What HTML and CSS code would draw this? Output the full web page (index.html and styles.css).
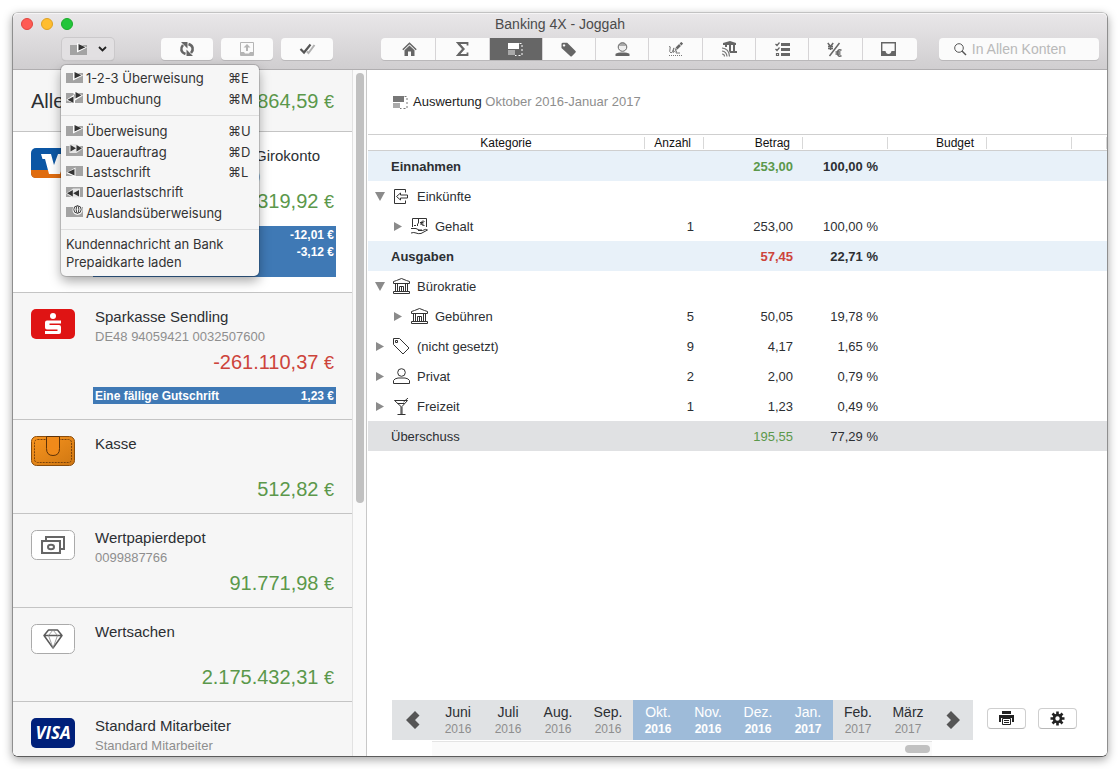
FILE: index.html
```html
<!DOCTYPE html>
<html lang="de">
<head>
<meta charset="utf-8">
<title>Banking 4X - Joggah</title>
<link rel="stylesheet" href="styles.css">
</head>
<body>
<svg class="sprite" aria-hidden="true">
  <symbol id="i-out" viewBox="0 0 17 13"><path fill="#a3a3a3" d="M0 2h17v10H0z"/><path fill="#fff" d="M7 0l10 4.500-10 5z"/><path fill="#333" d="M8.500 1v6.500l7-3.300z"/></symbol>
  <symbol id="i-swap" viewBox="0 0 17 13"><path fill="#a3a3a3" d="M0 2h17v10H0z"/><path fill="#fff" d="M7 0l10 4.500-8 5zM9 3L0 9l9 4z"/><path fill="#333" d="M9.500 1v6.500l6-3.300zM7.500 5.500v6.500l-6-3.300z"/></symbol>
  <symbol id="i-out2" viewBox="0 0 17 13"><path fill="#a3a3a3" d="M0 2h17v10H0z"/><path fill="#e6e6e6" d="M3.500 0h7l6.500 4.500-6.500 4.500-7 0z"/><path fill="#333" d="M4.500 1v6.500l5.500-3.300zM10.500 1v6.500l5.500-3.300z"/></symbol>
  <symbol id="i-in" viewBox="0 0 17 13"><path fill="#a3a3a3" d="M0 2h17v10H0z"/><path fill="#fff" d="M9.500 3.500L0 9l9.500 4z"/><path fill="#333" d="M8.500 5v6.500l-7-3.300z"/></symbol>
  <symbol id="i-in2" viewBox="0 0 17 13"><path fill="#a3a3a3" d="M0 2h17v10H0z"/><path fill="#e6e6e6" d="M7 3.500L0 8.500l6 4h8v-9z"/><path fill="#333" d="M6.800 5v6.500L1 8.200zM13 5v6.500L7.200 8.200z"/></symbol>
  <symbol id="i-world" viewBox="0 0 17 13"><path fill="#a3a3a3" d="M0 2h17v10H0z"/><circle cx="11.500" cy="5" r="5" fill="#f6f6f6"/><circle cx="11.500" cy="4.500" r="3.700" fill="none" stroke="#444"/><ellipse cx="11.500" cy="4.500" rx="1.300" ry="3.700" fill="none" stroke="#444"/></symbol>
  <symbol id="i-report" viewBox="0 0 15 13"><path fill="#aaa" d="M0 7h7v5H0z"/><path fill="currentColor" d="M0 0h11v6H0z"/><path fill="none" stroke="currentColor" stroke-dasharray="2 2" d="M11.500.5H14v12H7"/></symbol>
  <symbol id="i-bank" viewBox="0 0 17 17"><path fill="none" stroke="#333" d="M.5 5.500v-2l3-1 5-2 5 2 3 1v2zM2.500 5.500v8M4.500 5.500v8M12.500 5.500v8M14.500 5.500v8M6.500 13.500v-5h4v5M8.500 9v5M.5 15.500v-2h16v2z"/></symbol>
</svg>
<div class="window">
  <header class="chrome">
    <div class="titlebar">
      <div class="lights"><button class="light light-close" aria-label="Schließen"></button><button class="light light-min" aria-label="Minimieren"></button><button class="light light-zoom" aria-label="Zoomen"></button></div>
      <h1 class="title">Banking 4X - Joggah</h1>
    </div>
    <div class="toolbar">
      <div class="dropdown">
        <button class="tool tool-open" aria-label="Neuer Auftrag" aria-expanded="true"><svg width="17" height="13"><use href="#i-out"/></svg><svg width="9" height="6" viewBox="0 0 9 6"><path d="M1 1l3.500 3.500L8 1" fill="none" stroke="#222" stroke-width="1.800"/></svg></button>
        <div class="menu" role="menu">
          <div class="menu-group menu-group-two">
            <button class="menu-item" role="menuitem"><svg class="menu-icon"><use href="#i-out"/></svg><span>1-2-3 Überweisung</span><kbd>⌘E</kbd></button>
            <button class="menu-item" role="menuitem"><svg class="menu-icon"><use href="#i-swap"/></svg><span>Umbuchung</span><kbd>⌘M</kbd></button>
          </div>
          <div class="menu-group menu-group-five">
            <button class="menu-item" role="menuitem"><svg class="menu-icon"><use href="#i-out"/></svg><span>Überweisung</span><kbd>⌘U</kbd></button>
            <button class="menu-item" role="menuitem"><svg class="menu-icon"><use href="#i-out2"/></svg><span>Dauerauftrag</span><kbd>⌘D</kbd></button>
            <button class="menu-item" role="menuitem"><svg class="menu-icon"><use href="#i-in"/></svg><span>Lastschrift</span><kbd>⌘L</kbd></button>
            <button class="menu-item" role="menuitem"><svg class="menu-icon"><use href="#i-in2"/></svg><span>Dauerlastschrift</span></button>
            <button class="menu-item" role="menuitem"><svg class="menu-icon"><use href="#i-world"/></svg><span>Auslandsüberweisung</span></button>
          </div>
          <div class="menu-group menu-group-plain">
            <button class="menu-item" role="menuitem">Kundennachricht an Bank</button>
            <button class="menu-item" role="menuitem">Prepaidkarte laden</button>
          </div>
        </div>
      </div>
      <div class="tools">
        <button class="tool" aria-label="Aktualisieren"><svg width="16" height="16" viewBox="0 0 16 16"><path fill="none" stroke="#666" stroke-width="2.600" d="M6.500 13C2 11.500 1 7.500 4 4M9.500 3c4.500 1.500 5.500 5.500 2.500 9"/><path fill="#666" d="M2 1h6.500v6.500zM14 15H7.500V8.500z"/></svg></button>
        <button class="tool" aria-label="Ausgang"><svg width="14" height="14" viewBox="0 0 14 14"><path fill="none" stroke="#b5b5b5" d="M.5.5h13v13H.5z"/><path fill="#b5b5b5" d="M1 10h3l1 1.500h4l1-1.500h3v3H1zM7 2l3.500 3.500H8V9H6V5.500H3.500z"/></svg></button>
        <button class="tool" aria-label="Als gelesen markieren"><svg width="17" height="12" viewBox="0 0 17 12"><path fill="none" stroke="#b0b0b0" stroke-width="2" d="M8 8.500l1.500 1.500L15.500 2"/><path fill="none" stroke="#555" stroke-width="2.200" d="M1.500 6L5 9.500 11.500 1.500"/></svg></button>
      </div>
      <nav class="segments" aria-label="Ansicht">
        <button class="seg" aria-label="Start"><svg width="15" height="15" viewBox="0 0 15 15"><path fill="none" stroke="#666" stroke-width="1.600" d="M.8 7.800L7.500 1.300l6.700 6.500"/><path fill="#666" d="M2.500 8.300l5-4.800 5 4.800V14H9V9.500H6V14H2.500z"/></svg></button>
        <button class="seg" aria-label="Umsätze"><svg width="13" height="14" viewBox="0 0 13 14"><path fill="none" stroke="#666" stroke-width="1.800" d="M11.500 3.500V1H2l5.500 6L2 13h9.500v-2.500"/><path fill="none" stroke="#666" stroke-width="2" d="M2.500 1.500L7.500 7l-5 5.500"/></svg></button>
        <button class="seg seg-active" aria-label="Auswertung"><svg width="15" height="13"><use href="#i-report"/></svg></button>
        <button class="seg" aria-label="Kategorien"><svg width="15" height="15" viewBox="0 0 15 15"><path fill="#666" fill-rule="evenodd" d="M.5 2Q.5.8 2 .8h4.200L14.500 9q.6.700 0 1.400l-3.700 3.800q-.7.500-1.400 0L.5 6zM3 2.200a1.200 1.200 0 1 0 .1 0z"/></svg></button>
        <button class="seg" aria-label="Kontakte"><svg width="15" height="15" viewBox="0 0 15 15"><circle cx="7.500" cy="5" r="4.300" fill="#eee" stroke="#666"/><path fill="#666" fill-opacity=".5" d="M3.500 4Q4.500.8 7.500.8T11.500 4z"/><path fill="#666" d="M.5 14v-2Q1 11 5 10.500h5Q14 11 14.500 12v2z"/></svg></button>
        <button class="seg" aria-label="Verträge"><svg width="15" height="15" viewBox="0 0 15 15"><path fill="none" stroke="#777" d="M1 4.500Q3 4 2 7T3 11q1.500-.5 2.500-4T5 10.500Q7 9 8 8.500T8 11h4"/><path fill="none" stroke="#666" stroke-width="2.600" d="M8.500 6.500L12 3M12.500 2.500L14.200.8"/><path fill="#666" d="M7 8.500l.5-2.500L9 7.500z"/><path fill="none" stroke="#777" stroke-dasharray="1 1" d="M1 13.500h13"/></svg></button>
        <button class="seg" aria-label="Bankkontakte"><svg width="16" height="16" viewBox="0 0 16 16"><path fill="#666" d="M2 2l7-2 6 2v2H2zM8 4h2v6H8zM12 4h2v6h-2zM4 4h2v2H4zM8 10h8v2H9z"/><path fill="none" stroke="#777" stroke-width="1.200" d="M1 7q7 .5 7.500 8.500M1 10q4.500.5 5 5.500M1 13q2.500 0 2.500 2.500"/></svg></button>
        <button class="seg" aria-label="Aufträge"><svg width="15" height="15" viewBox="0 0 15 15"><path fill="#666" d="M6 1h9v3H6zM6 6h9v3H6zM6 11h9v3H6z"/><path fill="none" stroke="#666" stroke-width="1.200" d="M.5 2l1.500 1.500L4.500.5M.5 7l1.500 1.500L4.500 5.500M1.500 11.500h2v2h-2z"/></svg></button>
        <button class="seg" aria-label="Devisen"><svg width="16" height="15" viewBox="0 0 16 15"><path fill="none" stroke="#666" stroke-width="1.500" d="M12.500 1l-10 13M.8 1L3.500 4.500 6.200 1M3.500 4v4M1 4.500h5M1 6.500h5M14.500 8.200Q10.500 6.800 10.500 11t4 2.800M8.500 10h5M8.500 12h5"/></svg></button>
        <button class="seg" aria-label="Ablage"><svg width="15" height="14" viewBox="0 0 15 14"><path fill="none" stroke="#666" stroke-width="1.400" d="M.7.7h13.600v12.600H.7z"/><path fill="#666" d="M1 9h3.500q.5 3 3 3t3-3H14v4.500H1z"/></svg></button>
      </nav>
      <label class="search"><svg width="13" height="13" viewBox="0 0 13 13"><circle cx="5" cy="5" r="4.300" fill="none" stroke="#555"/><path d="M8 8l4 4" stroke="#555" stroke-width="1.400"/></svg><input class="search-input" type="search" aria-label="Suche" placeholder="In Allen Konten"></label>
    </div>
  </header>
  <div class="body">
    <aside class="sidebar">
      <div class="accounts">
        <section class="total"><h2 class="total-name">Alle</h2><p class="amount">864,59 <small>€</small></p></section>
        <section class="account account-selected">
          <svg class="logo" viewBox="0 0 44 30"><rect width="44" height="30" rx="5" fill="#0b56a4"/><path fill="#e06c0f" d="M0 22h44v3q0 5-5 5H5q-5 0-5-5z"/><path fill="#fff" d="M10 6h10l3 11 4-11h9l-7 20H18L14 11h-2.500z"/></svg>
          <div class="account-text"><p class="account-name account-name-product">Girokonto</p><p class="account-sub account-sub-end">)</p><p class="amount">319,92 <small>€</small></p>
          <div class="notes"><p class="note"><span></span><span>-12,01 €</span></p><p class="note"><span></span><span>-3,12 €</span></p><p class="note"></p></div></div>
        </section>
        <section class="account">
          <svg class="logo" viewBox="0 0 44 30"><rect width="44" height="30" rx="5" fill="#df1414"/><circle cx="22" cy="7" r="3" fill="#fff"/><path fill="#fff" d="M16 11.500h14v3H18.500v1.500H28q2 0 2 2v5q0 2-2 2H14v-3h12.500v-1.500H16q-2 0-2-2v-5q0-2 2-2z"/></svg>
          <div class="account-text"><p class="account-name">Sparkasse Sendling</p><p class="account-sub">DE48 94059421 0032507600</p><p class="amount amount-negative">-261.110,37 <small>€</small></p>
          <div class="notes"><p class="note"><span>Eine fällige Gutschrift</span><span>1,23 €</span></p></div></div>
        </section>
        <section class="account">
          <svg class="logo" viewBox="0 0 44 30"><defs><linearGradient id="leather" x2="1" y2="1"><stop stop-color="#f9951f"/><stop offset="1" stop-color="#cf7712"/></linearGradient></defs><rect x=".5" y=".5" width="43" height="29" rx="5" fill="url(#leather)" stroke="#8a4d0c"/><rect x="3.500" y="3.500" width="37" height="23" rx="3" fill="none" stroke="#7a420b" stroke-dasharray="2 1"/><path fill="#f08a1a" stroke="#5d3208" d="M15.500.5v12q0 7 6.500 7t6.500-7V.5z"/></svg>
          <div class="account-text"><p class="account-name">Kasse</p><p class="account-sub"></p><p class="amount">512,82 <small>€</small></p></div>
        </section>
        <section class="account">
          <svg class="logo" viewBox="0 0 44 30"><rect x=".5" y=".5" width="43" height="29" rx="5" fill="#fff" stroke="#aaa"/><path fill="none" stroke="#666" stroke-width="2" d="M15 10V7h18v12h-3M11 11h18v12H11z"/><path fill="#666" d="M10 10h5l-5 4zM30 10h-5l5 4zM10 24h5l-5-4zM30 24h-5l5-4z"/><ellipse cx="20" cy="17" rx="3" ry="2.300" fill="none" stroke="#666" stroke-width="2"/></svg>
          <div class="account-text"><p class="account-name">Wertpapierdepot</p><p class="account-sub">0099887766</p><p class="amount">91.771,98 <small>€</small></p></div>
        </section>
        <section class="account">
          <svg class="logo" viewBox="0 0 44 30"><rect x=".5" y=".5" width="43" height="29" rx="5" fill="#fff" stroke="#aaa"/><path fill="none" stroke="#5a5a5a" stroke-width="1.500" stroke-linejoin="round" d="M17.500 6h9l4.500 5.500L22 24l-9-12.500zM13 11.500h18"/><path fill="none" stroke="#888" stroke-width=".8" d="M17.500 11.500L22 24l4.500-12.500L22 6l-4.500 5.500"/></svg>
          <div class="account-text"><p class="account-name">Wertsachen</p><p class="account-sub"></p><p class="amount">2.175.432,31 <small>€</small></p></div>
        </section>
        <section class="account">
          <div class="logo visa">VISA</div>
          <div class="account-text"><p class="account-name">Standard Mitarbeiter</p><p class="account-sub">Standard Mitarbeiter</p></div>
        </section>
      </div>
      <div class="scrollbar"><div class="thumb"></div></div>
    </aside>
    <main class="main">
      <h2 class="heading"><svg width="15" height="13"><use href="#i-report"/></svg><span>Auswertung <span class="range">Oktober 2016-Januar 2017</span></span></h2>
      <table class="report">
        <colgroup><col class="c-cat"><col class="c-num"><col class="c-sum"><col class="c-pct"><col class="c-sum"><col class="c-pct"><col class="c-rest"></colgroup>
        <thead><tr><th><span>Kategorie</span></th><th><span>Anzahl</span></th><th><span>Betrag</span></th><th><span></span></th><th><span>Budget</span></th><th><span></span></th><th><span></span></th></tr></thead>
        <tbody>
          <tr class="row-group"><td><div class="cat cat-plain">Einnahmen</div></td><td></td><td class="pos">253,00</td><td>100,00 %</td><td></td><td></td><td></td></tr>
          <tr><td><div class="cat"><button class="tri tri-open" aria-label="Zuklappen"></button><svg class="cat-icon" viewBox="0 0 17 17"><path fill="none" stroke="#333" d="M12.500 4.500v-3h-11v14h11v-3M3.500 8.500L7.500 5v2h7v3h-7v2z"/></svg>Einkünfte</div></td><td></td><td></td><td></td><td></td><td></td><td></td></tr>
          <tr><td><div class="cat cat-sub"><button class="tri" aria-label="Aufklappen"></button><svg class="cat-icon" viewBox="0 0 17 17"><path fill="none" stroke="#333" d="M1.500 9V.5h14V9M3 7.500h2M6.500 8V6l1-1V1M13.500 3.500Q10.500 2 10.500 5t3 2.500M9 4.500h3.500M9 6h3.500M0 10.500h5l3 1.500h3M0 15q3-1 5 0t5 .5l6.500-3.500q-1.500-1.500-5 .5H7"/></svg>Gehalt</div></td><td>1</td><td>253,00</td><td>100,00 %</td><td></td><td></td><td></td></tr>
          <tr class="row-group"><td><div class="cat cat-plain">Ausgaben</div></td><td></td><td class="neg">57,45</td><td>22,71 %</td><td></td><td></td><td></td></tr>
          <tr><td><div class="cat"><button class="tri tri-open" aria-label="Zuklappen"></button><svg class="cat-icon"><use href="#i-bank"/></svg>Bürokratie</div></td><td></td><td></td><td></td><td></td><td></td><td></td></tr>
          <tr><td><div class="cat cat-sub"><button class="tri" aria-label="Aufklappen"></button><svg class="cat-icon"><use href="#i-bank"/></svg>Gebühren</div></td><td>5</td><td>50,05</td><td>19,78 %</td><td></td><td></td><td></td></tr>
          <tr><td><div class="cat"><button class="tri" aria-label="Aufklappen"></button><svg class="cat-icon" viewBox="0 0 17 17"><path fill="none" stroke="#333" d="M.5.5h6l9.500 9.500-6 6L.5 6.500zM2.500 2.500h2v2h-2z"/></svg>(nicht gesetzt)</div></td><td>9</td><td>4,17</td><td>1,65 %</td><td></td><td></td><td></td></tr>
          <tr><td><div class="cat"><button class="tri" aria-label="Aufklappen"></button><svg class="cat-icon" viewBox="0 0 17 17"><circle cx="8.500" cy="4.500" r="3.800" fill="none" stroke="#333"/><path fill="none" stroke="#333" d="M.5 15.500v-3q1-2 4.500-2.500h7q3.500.5 4.500 2.500v3z"/></svg>Privat</div></td><td>2</td><td>2,00</td><td>0,79 %</td><td></td><td></td><td></td></tr>
          <tr><td><div class="cat"><button class="tri" aria-label="Aufklappen"></button><svg class="cat-icon" viewBox="0 0 17 17"><path fill="none" stroke="#333" d="M1.500 2.500h13L9 8.500v7.500M8 16V8.500L1.500 2.500M4.500 5.500h7M10.500 4L15 0M4.500 16.500h8"/></svg>Freizeit</div></td><td>1</td><td>1,23</td><td>0,49 %</td><td></td><td></td><td></td></tr>
          <tr class="row-total"><td><div class="cat cat-plain">Überschuss</div></td><td></td><td class="pos">195,55</td><td>77,29 %</td><td></td><td></td><td></td></tr>
        </tbody>
      </table>
      <footer class="footer">
        <div class="period">
          <div class="timeline">
            <button class="arrow" aria-label="Zurück"><svg width="14" height="18" viewBox="0 0 14 18"><path fill="#555" d="M9 0l4.500 4.500L9 9l4.500 4.500L9 18 0 9z"/></svg></button>
            <button class="month">Juni<small>2016</small></button><button class="month">Juli<small>2016</small></button><button class="month">Aug.<small>2016</small></button><button class="month">Sep.<small>2016</small></button><button class="month month-on">Okt.<small>2016</small></button><button class="month month-on">Nov.<small>2016</small></button><button class="month month-on">Dez.<small>2016</small></button><button class="month month-on">Jan.<small>2017</small></button><button class="month">Feb.<small>2017</small></button><button class="month">März<small>2017</small></button>
            <button class="arrow" aria-label="Weiter"><svg width="14" height="18" viewBox="0 0 14 18"><path fill="#555" d="M5 0L.5 4.500 5 9 .5 13.500 5 18l9-9z"/></svg></button>
          </div>
          <div class="hscroll"><div class="hthumb"></div></div>
        </div>
        <button class="action" aria-label="Drucken"><svg width="15" height="15" viewBox="0 0 15 15"><path fill="#222" d="M3 0h9v3H3zM0 4h15v7H0z"/><path fill="#fff" d="M2 7h11v1H2zM2 8h11v7H2z"/><path fill="#fff" stroke="#222" d="M3.500 7.500h8v6h-8z"/><path stroke="#222" d="M5 9.500h5M5 11.500h5"/></svg></button>
        <button class="action" aria-label="Einstellungen"><svg width="15" height="15" viewBox="-7.500 -7.500 15 15"><path stroke="#222" stroke-width="2.600" d="M0-7V-3M0 3v4M-7 0h4M3 0h4M-5-5l3 3M2 2l3 3M5-5L2-2M-2 2l-3 3"/><circle r="3.500" fill="none" stroke="#222" stroke-width="2.600"/></svg></button>
      </footer>
    </main>
  </div>
</div>
</body>
</html>
```
FILE: styles.css
```css
* { box-sizing: border-box; }
body { margin: 0; padding: 12px; background: #fff; color: #2c2f33; font: 13px/16px "Liberation Sans", Arial, sans-serif; }
h1, h2, p { margin: 0; font-weight: normal; }
button { margin: 0; padding: 0; border: 0; background: none; color: inherit; font: inherit; }
svg { display: block; flex: none; }
.sprite { position: absolute; width: 0; height: 0; }

.window { display: grid; grid-template-rows: auto minmax(0, 1fr); height: calc(100vh - 24px); border: 1px solid #8f8f8f; border-top-color: #c2c2c2; border-bottom-color: #5c5c5c; border-radius: 6px; box-shadow: 0 3px 10px rgba(0, 0, 0, .35); }
.chrome { border-bottom: 1px solid #b0aeb0; border-radius: 5px 5px 0 0; background: linear-gradient(#e9e7e9, #d0ced0); box-shadow: inset 0 1px #f6f5f6; }
.titlebar { display: grid; grid-template-columns: 1fr auto 1fr; align-items: center; height: 22px; padding: 0 8px; }
.lights { display: flex; gap: 8px; }
.light { width: 12px; height: 12px; border: 1px solid #e0443e; border-radius: 50%; background: #ff5b54; }
.light-min { border-color: #dea123; background: #ffbd2e; }
.light-zoom { border-color: #1aab29; background: #22c53a; }
.title { color: #4b4b4b; font-size: 14px; }
.toolbar { display: flex; align-items: center; padding: 3px 8px 9px 49px; }
.tools { display: flex; gap: 8px; margin: 0 48px 0 47px; }
.tool { display: flex; align-items: center; justify-content: center; width: 52px; height: 22px; border-radius: 4px; background: #fbfbfb; box-shadow: 0 1px #bab8ba; }
.tool-open { gap: 11px; background: #e2e0e2; box-shadow: 0 0 0 1px #cbc9cb, 0 1px 1px #aaa; }
.segments { display: flex; flex: 535 1 0; gap: 1px; border-radius: 4px; background: #d6d4d6; box-shadow: 0 1px #bab8ba; }
.seg { display: flex; flex: 1; align-items: center; justify-content: center; height: 22px; background: #fbfbfb; }
.seg:first-child { border-radius: 4px 0 0 4px; padding-left: 2px; }
.seg:last-child { border-radius: 0 4px 4px 0; padding-right: 2px; }
.seg-active { background: #666; color: #fff; }
.search { display: flex; flex: 145 1 0; min-width: 0; align-items: center; gap: 5px; height: 22px; margin-left: 22px; padding-left: 15px; border-radius: 4px; background: #fbfbfb; box-shadow: 0 1px #bab8ba; }
.search-input { flex: 1; min-width: 0; padding: 0; border: 0; outline: 0; background: none; font: 14px/16px "Liberation Sans", Arial, sans-serif; }
.search-input::placeholder { color: #b9b9b9; }

.dropdown { position: relative; }
.menu { position: absolute; z-index: 2; top: 27px; left: -1px; width: 198px; padding: 3px 0 5px; border-radius: 5px; background: #f6f6f6; box-shadow: 0 0 0 1px rgba(0, 0, 0, .15), 0 5px 12px rgba(0, 0, 0, .35); font: 13px/18px Inter, "Liberation Sans", sans-serif; color: #333; }
.menu-group { display: grid; grid-auto-rows: 1fr; }
.menu-group + .menu-group { margin-top: 6px; padding-top: 5px; border-top: 1px solid #dedede; }
.menu-group-two { height: 41px; }
.menu-group-five { height: 108px; }
.menu-item { display: grid; grid-template-columns: 17px minmax(0, 1fr) 27px; align-items: center; gap: 3px; padding: 0 4px 0 5px; text-align: left; white-space: nowrap; }
.menu-item kbd { font: inherit; }
.menu-icon { width: 17px; height: 13px; margin-bottom: 2px; }
.menu-group-plain .menu-item { display: block; }

.body { display: grid; grid-template-columns: 354px minmax(0, 1fr); min-height: 0; border-radius: 0 0 5px 5px; overflow: hidden; background: #fff; }
.sidebar { display: grid; grid-template-columns: minmax(0, 1fr) 14px; min-height: 0; border-right: 1px solid #c8c8c8; }
.accounts { min-height: 0; overflow: hidden; background: #f6f6f6; }
.total { display: flex; align-items: center; justify-content: space-between; height: 62px; padding: 0 18px; border-bottom: 1px solid #c4c4c4; }
.total-name { font-size: 20px; }
.amount { color: #5b984b; font-size: 20px; line-height: 24px; text-align: right; }
.amount small { font-size: 18px; line-height: 1; }
.amount-negative { color: #cd443b; }
.account { display: grid; grid-template-columns: 44px minmax(0, 1fr); gap: 18px; min-height: 94px; padding: 16px 16px 15px 18px; border-bottom: 1px solid #c4c4c4; }
.account-selected { background: #fff; }
.logo { width: 44px; height: 30px; }
.visa { border-radius: 5px; background: #00207a; color: #fff; font: italic bold 17px/30px "Open Sans", sans-serif; text-align: center; }
.account-name, .account-sub, .account .amount { padding: 0 2px; }
.account-name { font-size: 15px; line-height: 16px; }
.account-name-product { padding-left: 162px; }
.account-sub { height: 18px; margin-top: 3px; color: #8e8e8e; line-height: 18px; }
.account-sub-end { padding-left: 163px; }
.account .amount { height: 24px; margin: 4px 0 -14px; }
.notes { margin-top: 27px; background: #3f79b5; color: #fff; font-size: 12px; }
.note { display: flex; justify-content: space-between; height: 17px; padding: 1px 2px 0; font-weight: bold; line-height: 16px; }
.scrollbar { padding: 3px 2px 0 3px; border-left: 1px solid #e2e2e2; background: #fafafa; }
.thumb { height: 63%; width: 8px; border-radius: 4px; background: #c1c1c1; }

.main { display: flex; flex-direction: column; min-width: 0; min-height: 0; padding-left: 1px; }
.heading { display: flex; align-items: center; gap: 5px; padding: 24px 25px; color: #222; font-size: 13px; line-height: 16px; }
.heading svg { color: #777; }
.range { color: #8e8e8e; }
.report { width: 100%; border-collapse: collapse; table-layout: fixed; }
.c-cat { width: 277px; }
.c-num { width: 59px; }
.c-sum { width: 99px; }
.c-pct { width: 85px; }
.report th { height: 16px; padding: 2px 0 1px; border: solid #cfcfcf; border-width: 1px 0; font-size: 12px; font-weight: normal; line-height: 13px; color: #111; }
.report th span { display: block; height: 12px; padding-right: 12px; border-right: 1px solid #d8d8d8; text-align: right; }
.report th:first-child span { padding: 0; text-align: center; }
.report td { height: 30px; padding: 2px 10px 0 0; text-align: right; white-space: nowrap; }
.report td:first-child { padding: 2px 0 0; }
.cat { display: flex; align-items: center; padding-left: 7px; }
.cat-sub { padding-left: 25px; }
.cat-plain { padding-left: 23px; }
.cat-icon { width: 17px; height: 17px; margin: 0 7px 0 8px; }
.tri { width: 10px; height: 9px; background: #8b8b8b; clip-path: polygon(10% 0, 90% 50%, 10% 100%); }
.tri-open { clip-path: polygon(0 0, 100% 0, 50% 100%); }
.row-group { background: #e8f1f9; font-weight: bold; }
.row-total { background: #e0e1e3; }
.report .pos { color: #5b984b; }
.report .neg { color: #cd443b; }

.footer { display: flex; gap: 12px; margin-top: auto; padding: 0 30px 0 24px; }
.period { flex: 0 1 581px; margin-right: 2px; }
.timeline { display: grid; grid-template-columns: 41px repeat(10, 1fr) 40px; height: 40px; background: #e0e2e4; }
.arrow { display: grid; place-items: center; }
.month { padding-top: 1px; font-size: 14px; line-height: 17px; }
.month small { display: block; color: #8e8e8e; font-size: 12px; }
.month-on { background: #9ebbd9; color: #fff; }
.month-on small { color: #fff; font-weight: bold; }
.hscroll { display: flex; justify-content: flex-end; height: 15px; margin: 1px 41px 0 40px; padding: 3px 2px 0; border-top: 1px solid #e4e4e4; background: #fafafa; }
.hthumb { width: 25px; height: 8px; border-radius: 4px; background: #c1c1c1; }
.action { display: grid; place-items: center; width: 39px; height: 21px; margin-top: 8px; border: 1px solid #cfcfcf; border-bottom-color: #b8b8b8; border-radius: 4px; background: #fff; }
```
